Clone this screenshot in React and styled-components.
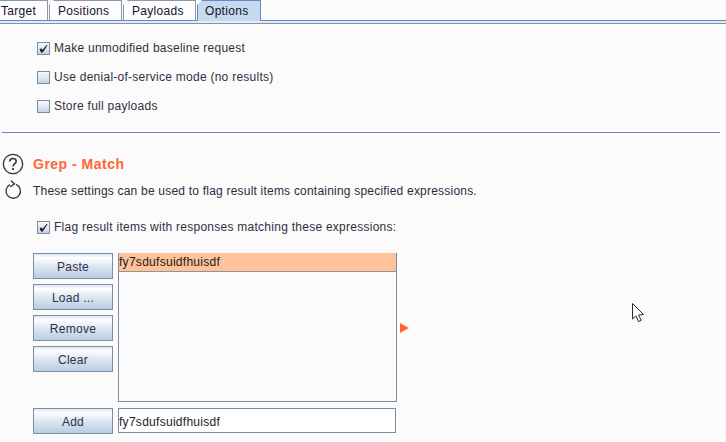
import React from "react";
import styled, { createGlobalStyle } from "styled-components";

const Global = createGlobalStyle`
  html, body { margin: 0; padding: 0; background: #fbfbfb; }
  body { width: 726px; height: 442px; overflow: hidden; }
`;

const Page = styled.div`
  position: relative;
  width: 726px;
  height: 442px;
  overflow: hidden;
  background: #fbfbfb;
  color: #2c2c3a;
  font-family: "Liberation Sans", Arial, sans-serif;
  font-size: 12px;
`;

const TabBar = styled.div`
  display: flex;
  height: 20px;
  box-sizing: border-box;
`;

const Tab = styled.div`
  box-sizing: border-box;
  width: ${(p) => p.$w}px;
  height: ${(p) => (p.$active ? 21 : 20)}px;
  margin-right: ${(p) => p.$gap}px;
  padding-left: ${(p) => p.$pad}px;
  line-height: 21px;
  letter-spacing: 0.3px;
  color: #141428;
  background: ${(p) => (p.$active ? "#c5daf0" : "#fdfdff")};
  border-top: 1px solid ${(p) => (p.$active ? "#6a85c0" : "#8a9aaa")};
  border-right: 1px solid ${(p) => (p.$active ? "#6a85c0" : "#8a9aaa")};
  border-left: ${(p) => (p.$first ? "none" : `1px solid ${p.$active ? "#6a85c0" : "#8a9aaa"}`)};
  clip-path: ${(p) => (p.$first ? "none" : "polygon(5px 0, 100% 0, 100% 100%, 0 100%, 0 5px)")};
  position: relative;
  z-index: ${(p) => (p.$active ? 1 : 0)};
`;

const TabBand = styled.div`
  height: 4px;
  box-sizing: border-box;
  background: #e4eaf3;
  border-top: 1px solid #6a85c0;
  border-bottom: 1px solid #7f93a8;
`;

const Options = styled.div`
  display: flex;
  flex-direction: column;
  gap: 15px;
  padding: 17px 0 0 37px;
`;

const CheckRow = styled.label`
  display: flex;
  align-items: center;
  gap: 4px;
  height: 14px;
  letter-spacing: 0.26px;
  color: #30303e;
`;

const RowText = styled.span`
  line-height: 14px;
`;

const Box = styled.span`
  box-sizing: border-box;
  width: 13px;
  height: 13px;
  border: 1px solid #7b8da2;
  background: linear-gradient(180deg, #f4f7fb 0%, #dfe7f1 55%, #c3d2e4 100%);
  display: flex;
  align-items: center;
  justify-content: center;
`;

const Divider = styled.div`
  height: 1px;
  width: 718px;
  margin: 19px 0 0 2px;
  background: #6a85c0;
`;

const SectionHead = styled.div`
  display: flex;
  align-items: center;
  margin-top: 20px;
  height: 22px;
  padding-left: 2px;
`;

const Heading = styled.h2`
  margin: 0 0 0 9px;
  font-size: 14px;
  font-weight: 700;
  letter-spacing: 0.5px;
  color: #ff6633;
`;

const DescRow = styled.div`
  display: flex;
  align-items: center;
  height: 22px;
  margin-top: 4px;
  padding-left: 4px;
`;

const Desc = styled.p`
  margin: 0 0 0 11px;
  padding-top: 1px;
  letter-spacing: 0.21px;
  color: #2c2c40;
`;

const FlagWrap = styled.div`
  margin-top: 19px;
  padding-left: 37px;
`;

const ListArea = styled.div`
  display: flex;
  margin-top: 19px;
  padding-left: 33px;
`;

const ButtonCol = styled.div`
  display: flex;
  flex-direction: column;
  gap: 5px;
  width: 80px;
`;

const Btn = styled.button`
  box-sizing: border-box;
  width: 80px;
  height: 26px;
  padding: 1px 0 0;
  border: 1px solid #7b8fa3;
  background: linear-gradient(180deg, #dfe8f2 0%, #fdfeff 16%, #dde7f2 50%, #b9cde2 100%);
  font: inherit;
  letter-spacing: 0.27px;
  color: #30304a;
`;

const List = styled.div`
  box-sizing: border-box;
  width: 279px;
  height: 149px;
  margin-left: 5px;
  border: 1px solid #7b8da0;
  border-top: none;
  background: #fbfbfb;
`;

const Selected = styled.div`
  box-sizing: border-box;
  height: 19px;
  line-height: 18px;
  background: #ffc299;
  border-bottom: 1px solid #8a95a0;
  color: #1c1c1c;
  letter-spacing: 0.28px;
`;

const Arrow = styled.span`
  width: 0;
  height: 0;
  margin: 70px 0 0 3px;
  border-left: 9px solid #ff6633;
  border-top: 5px solid transparent;
  border-bottom: 5px solid transparent;
`;

const AddRow = styled.div`
  display: flex;
  margin-top: 6px;
  padding-left: 33px;
`;

const Field = styled.input`
  box-sizing: border-box;
  width: 278px;
  height: 25px;
  margin-left: 5px;
  padding: 2px 0 0 0;
  border: 1px solid #7b8da0;
  border-radius: 0;
  outline: none;
  background: #fff;
  font: inherit;
  letter-spacing: 0.28px;
  color: #1c1c1c;
`;

const Cursor = styled.svg`
  position: absolute;
  left: 632px;
  top: 303px;
`;

const Check = () => (
  <svg width="11" height="11" viewBox="0 0 11 11">
    <path d="M1.5 6 L3.5 5.5 L4.4 7 L8.6 2 L9.6 2 L4.8 9.4 L3 9.4 Z" fill="#1e1e22" />
  </svg>
);

const HelpIcon = () => (
  <svg width="22" height="22" viewBox="0 0 22 22">
    <circle cx="11" cy="11" r="9.7" fill="none" stroke="#333" strokeWidth="1.3" />
    <path d="M7.8 8.4 C7.8 4.6 14.2 4.6 14.2 8.4 C14.2 10.6 11 10.8 11 13.6" fill="none" stroke="#333" strokeWidth="1.5" />
    <rect x="10.1" y="15" width="1.8" height="2" fill="#333" />
  </svg>
);

const RefreshIcon = () => (
  <svg width="18" height="20" viewBox="0 0 18 20">
    <path d="M6 4.6 A7.2 7.2 0 1 0 12 4.4" fill="none" stroke="#333" strokeWidth="1.3" />
    <path d="M7 0.8 L10.5 4 L6.2 6.6" fill="none" stroke="#333" strokeWidth="1.3" />
  </svg>
);

const tabs = [
  { label: "Target", w: 48, gap: 1, pad: 1, first: true },
  { label: "Positions", w: 73, gap: 1, pad: 8 },
  { label: "Payloads", w: 73, gap: 1, pad: 8 },
  { label: "Options", w: 64, gap: 0, pad: 7, active: true },
];

const buttons = ["Paste", "Load ...", "Remove", "Clear"];

export default function App() {
  return (
    <Page>
      <Global />
      <TabBar>
        {tabs.map((t) => (
          <Tab key={t.label} $w={t.w} $gap={t.gap} $pad={t.pad} $first={t.first} $active={t.active}>
            {t.label}
          </Tab>
        ))}
      </TabBar>
      <TabBand />
      <Options>
        <CheckRow><Box><Check /></Box><RowText>Make unmodified baseline request</RowText></CheckRow>
        <CheckRow><Box /><RowText>Use denial-of-service mode (no results)</RowText></CheckRow>
        <CheckRow><Box /><RowText>Store full payloads</RowText></CheckRow>
      </Options>
      <Divider />
      <SectionHead>
        <HelpIcon />
        <Heading>Grep - Match</Heading>
      </SectionHead>
      <DescRow>
        <RefreshIcon />
        <Desc>These settings can be used to flag result items containing specified expressions.</Desc>
      </DescRow>
      <FlagWrap>
        <CheckRow><Box><Check /></Box><RowText>Flag result items with responses matching these expressions:</RowText></CheckRow>
      </FlagWrap>
      <ListArea>
        <ButtonCol>
          {buttons.map((b) => <Btn key={b}>{b}</Btn>)}
        </ButtonCol>
        <List><Selected>fy7sdufsuidfhuisdf</Selected></List>
        <Arrow />
      </ListArea>
      <AddRow>
        <Btn>Add</Btn>
        <Field readOnly value="fy7sdufsuidfhuisdf" />
      </AddRow>
      <Cursor width="13" height="20" viewBox="0 0 13 20">
        <path d="M0.5 0.5 L0.5 16 L4 12.8 L6.6 18.6 L9.2 17.4 L6.6 12 L11.5 11.5 Z" fill="#fff" stroke="#2a2a35" strokeWidth="1" />
      </Cursor>
    </Page>
  );
}
